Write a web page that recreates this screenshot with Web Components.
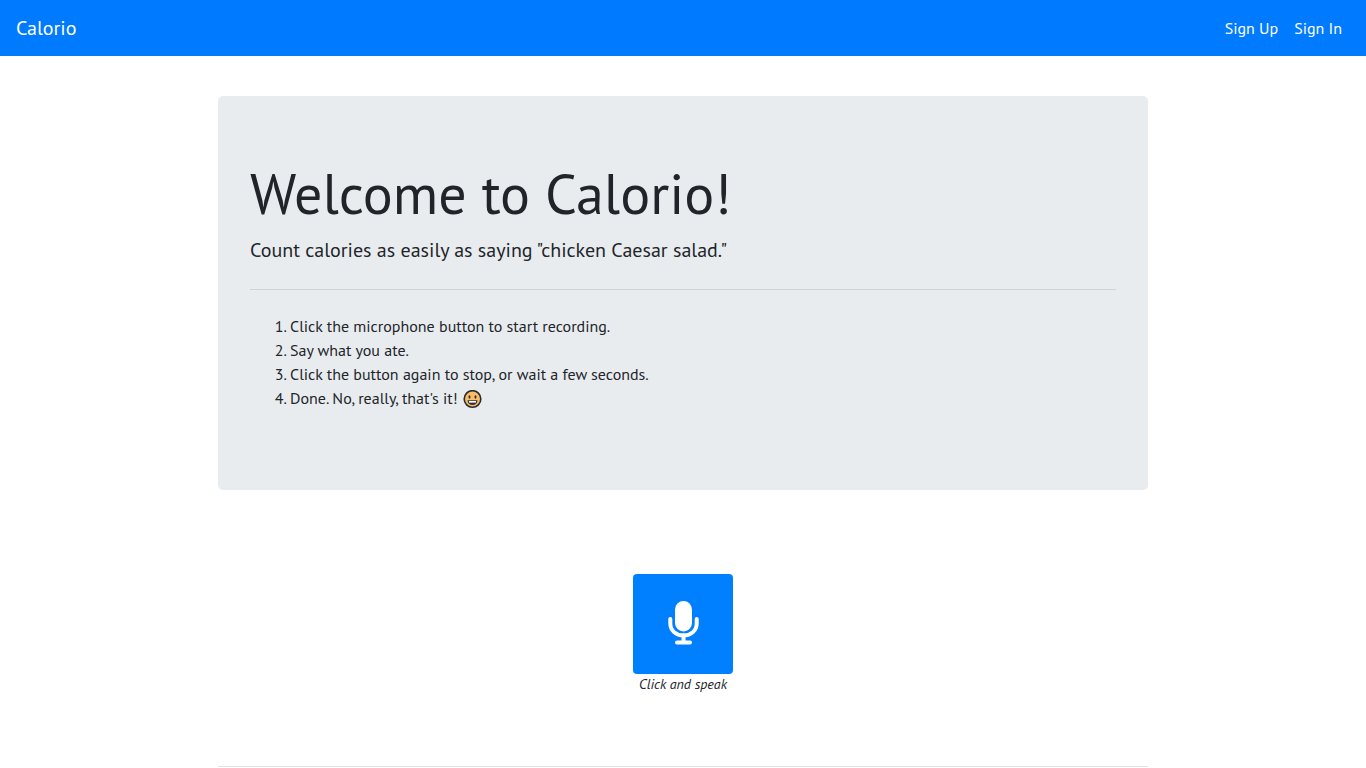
<!DOCTYPE html>
<html lang="en">
<head>
<meta charset="utf-8">
<meta name="viewport" content="width=device-width, initial-scale=1">
<title>Calorio</title>
<style>
  body { margin: 0; background: #fff; color: #212529; font: 16px/24px "PT Sans", "Noto Sans", sans-serif; }
  main { box-sizing: border-box; max-width: 960px; margin: 0 auto; padding: 40px 15px 0; }
</style>
</head>
<body>
<app-navbar brand="Calorio">
  <nav-link href="#sign-up">Sign Up</nav-link>
  <nav-link href="#sign-in">Sign In</nav-link>
</app-navbar>
<main>
  <welcome-panel>
    <span slot="title">Welcome to Calorio!</span>
    <span slot="lead">Count calories as easily as saying "chicken Caesar salad."</span>
    <step-list></step-list>
  </welcome-panel>
  <record-control>Click and speak</record-control>
  <section-rule></section-rule>
</main>
<script>
  const define = (name, html, setup) => {
    const template = document.createElement('template');
    template.innerHTML = html;
    customElements.define(name, class extends HTMLElement {
      constructor() {
        super();
        this.attachShadow({ mode: 'open' }).append(template.content.cloneNode(true));
      }
      connectedCallback() {
        if (setup) setup(this);
      }
    });
  };

  define('app-navbar', `
    <style>
      :host { display: block; background: #007bff; color: #fff; }
      nav { display: flex; align-items: center; justify-content: space-between; box-sizing: border-box; min-height: 56px; padding: 8px 16px; }
      .brand { color: inherit; text-decoration: none; font-size: 20px; line-height: 30px; }
      .links { display: flex; }
    </style>
    <nav><a class="brand" href="#"></a><div class="links"><slot></slot></div></nav>`,
    host => { host.shadowRoot.querySelector('.brand').textContent = host.getAttribute('brand'); });

  define('nav-link', `
    <style>
      :host { display: block; }
      a { display: block; padding: 8px; color: #fff; text-decoration: none; }
    </style>
    <a><slot></slot></a>`,
    host => { host.shadowRoot.querySelector('a').href = host.getAttribute('href'); });

  define('welcome-panel', `
    <style>
      :host { display: block; padding: 64px 32px; border-radius: 5px; background: #e9ecef; }
      h1 { margin: 0 0 8px; font-size: 56px; line-height: 67px; font-weight: 300; }
      p { margin: 0; font-size: 20px; line-height: 30px; font-weight: 300; }
      hr { margin: 24px 0; border: 0; border-top: 1px solid #d1d4d7; }
    </style>
    <h1><slot name="title"></slot></h1>
    <p><slot name="lead"></slot></p>
    <hr>
    <slot></slot>`);

  define('step-list', `
    <style>
      :host { display: block; }
      ol { margin: 0 0 16px; padding-left: 40px; }
      svg { width: 20px; height: 20px; vertical-align: middle; }
    </style>
    <ol>
      <li>Click the microphone button to start recording.</li>
      <li>Say what you ate.</li>
      <li>Click the button again to stop, or wait a few seconds.</li>
      <li>Done. No, really, that's it! <svg viewBox="0 0 20 20" role="img" aria-label="Grinning face">
        <circle cx="10.500" cy="9" r="8.300" fill="#f7bd68" stroke="#2b2930" stroke-width="1.600"/>
        <ellipse cx="7.500" cy="7" rx="1" ry="1.700" fill="#4a2822"/>
        <ellipse cx="13.500" cy="7" rx="1" ry="1.700" fill="#4a2822"/>
        <path d="M5.500 10.200h10c0 3-2 4.800-5 4.800s-5-1.800-5-4.800z" fill="#33323a"/>
        <path d="M7 11h7v1.600H7z" fill="#fff"/>
      </svg></li>
    </ol>`);

  define('record-control', `
    <style>
      :host { display: flex; flex-direction: column; align-items: center; padding: 84px 0 72px; }
      button { display: flex; align-items: center; justify-content: center; width: 100px; height: 100px; padding: 0; border: 0; border-radius: 4px; background: #0080ff; color: #fff; cursor: pointer; }
      svg { width: 32px; height: 46px; }
      label { font-size: 14px; line-height: 20px; font-style: italic; }
    </style>
    <button id="record" type="button">
      <svg viewBox="0 0 32 46" aria-hidden="true">
        <rect x="8" y="0" width="17" height="30.500" rx="8.500" fill="currentColor"/>
        <path d="M3.300 18v4.500c0 7 5.700 12 13.200 12s13.200-5 13.200-12V18M16.500 34v7M10 41.500h13" fill="none" stroke="currentColor" stroke-width="4" stroke-linecap="round"/>
      </svg>
    </button>
    <label for="record"><slot></slot></label>`);

  define('section-rule', `
    <style>
      :host { display: block; }
      hr { margin: 0; border: 0; border-top: 1px solid #e0e3e5; }
    </style>
    <hr>`);
</script>
</body>
</html>
